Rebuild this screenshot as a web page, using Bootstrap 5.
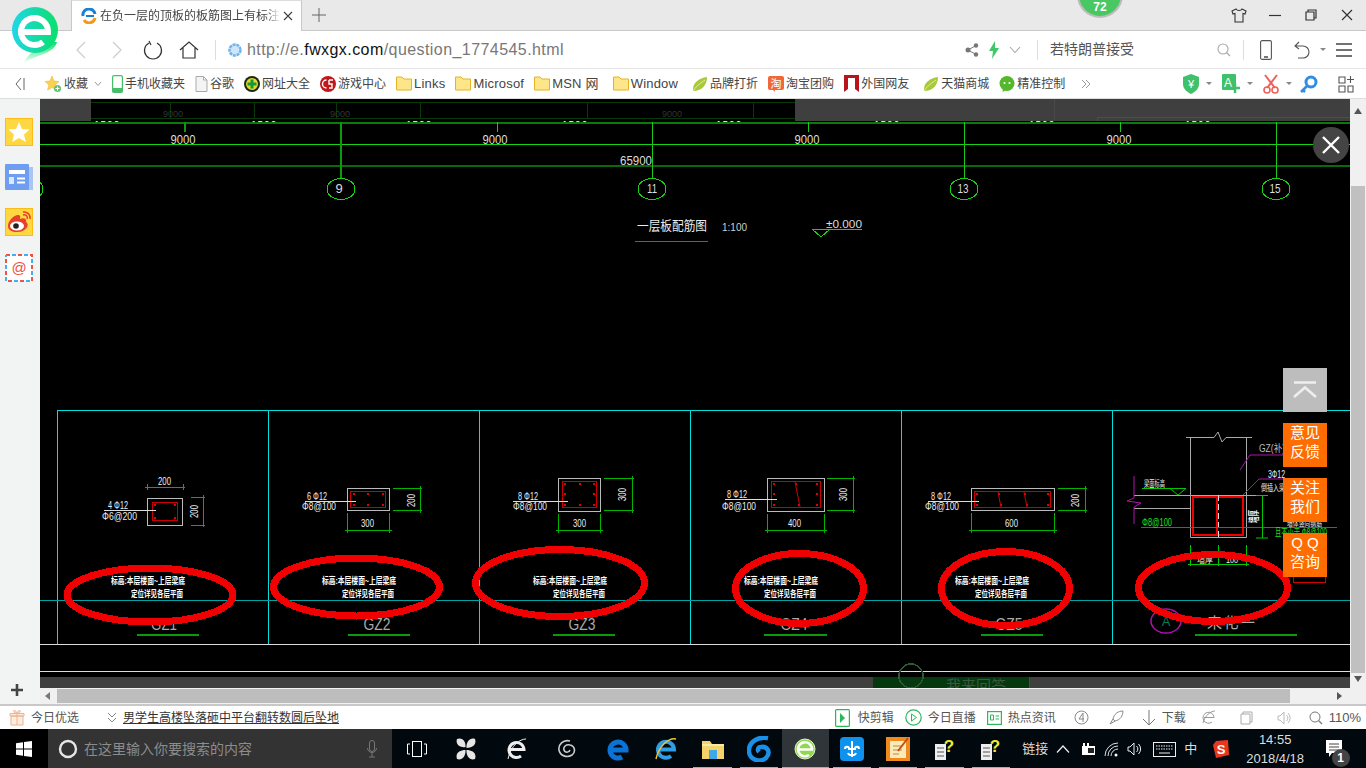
<!DOCTYPE html>
<html lang="zh">
<head>
  <meta charset="UTF-8" />
  <meta name="viewport" content="width=device-width, initial-scale=1.0" />
  <title>在负一层的顶板的板筋图上有标注</title>
  <link href="https://cdn.jsdelivr.net/npm/bootstrap@5.3.3/dist/css/bootstrap.min.css" rel="stylesheet" />
  <style>
    html, body { height: 768px; overflow: hidden; }
    body { font-family: "Liberation Sans", "Noto Sans CJK SC", sans-serif; font-size: 12px; color: #444; background: #fff; position: relative; }
    svg { display: block; flex-shrink: 0; }

    .app-logo { position: absolute; left: 10px; top: 6px; z-index: 5; }
    .score-ball { position: absolute; left: 1077px; top: -28px; width: 46px; height: 46px; border-radius: 50%; background: #48c763; border: 2px solid #bdbdbd; color: #fff; font-size: 12px; line-height: 14px; font-weight: 700; z-index: 5; padding-bottom: 2px; }

    .title-bar { height: 31px; background: #e9e9e9; border-bottom: 1px solid #c8c8c8; padding: 0 1px 0 71px; }
    .tab-item { width: 231px; height: 31px; background: #fff; border: 1px solid #c8c8c8; border-top-color: #ddd; border-bottom: 0; padding: 0 6px 0 9px; gap: 3px; }
    .tab-text { width: 180px; font-size: 12px; color: #444; white-space: nowrap; overflow: hidden; -webkit-mask-image: linear-gradient(90deg, #000 92%, transparent); mask-image: linear-gradient(90deg, #000 92%, transparent); }
    .tab-add { margin: 8px 0 0 10px; }
    .win-btn { width: 36px; }

    .addr-bar { height: 37px; background: #fff; padding-left: 63px; }
    .nav-slot { width: 36px; }
    .addr-sep { width: 1px; height: 20px; background: #ddd; }
    .addr-globe { margin-left: 11px; }
    .addr-url { font-size: 16px; color: #777; letter-spacing: .43px; white-space: nowrap; }
    .addr-url b { font-weight: 400; color: #111; }
    .addr-search { width: 197px; font-size: 14px; color: #555; padding: 0 4px 0 12px; }
    .addr-gap { margin-left: 10px; }

    .fav-bar { height: 31px; background: #fff; border-top: 1px solid #e6e6e6; border-bottom: 1px solid #ddd; padding-left: 14px; }
    .fav-item { gap: 2px; margin-left: 10px; white-space: nowrap; color: #444; }
    .fav-first { margin-left: 18px; }
    .fav-wide { margin-left: 14px; }
    .fav-latin { font-size: 13px; letter-spacing: .2px; }
    .fav-tools { gap: 4px; }
    .fav-caret { width: 0; height: 0; border-left: 3px solid transparent; border-right: 3px solid transparent; border-top: 3px solid #888; margin: 0 6px 0 3px; }

    .work-area { height: 605px; position: relative; }
    .side-rail { width: 40px; background: #f2f4f4; padding: 19px 5px 6px; gap: 18px; }
    .cad-view { width: 1310px; height: 589px; background: #000; }
    .cad-view text { font-family: "Liberation Sans", "Noto Sans CJK SC", sans-serif; }
    .vbar { width: 16px; height: 589px; background: #f0f0f0; padding-top: 87px; position: relative; }
    .vbar-thumb { height: 487px; background: #c0c0c0; margin: 0 1px; }
    .vbar-up { position: absolute; top: 9px; left: 4px; width: 0; height: 0; border-left: 4px solid transparent; border-right: 4px solid transparent; border-bottom: 6px solid #555; }
    .vbar-down { position: absolute; bottom: 6px; left: 4px; width: 0; height: 0; border-left: 4px solid transparent; border-right: 4px solid transparent; border-top: 6px solid #555; }
    .hbar { height: 16px; background: #f0f0f0; padding-left: 17px; position: relative; }
    .hbar-thumb { width: 1233px; height: 14px; background: #bdbdbd; margin-top: 1px; }
    .hbar-left { position: absolute; left: 5px; top: 4px; width: 0; height: 0; border-top: 4px solid transparent; border-bottom: 4px solid transparent; border-right: 5px solid #777; }
    .hbar-right { position: absolute; left: 1297px; top: 4px; width: 0; height: 0; border-top: 4px solid transparent; border-bottom: 4px solid transparent; border-left: 5px solid #555; }
    .view-close { position: absolute; left: 1313px; top: 28px; width: 36px; height: 36px; border-radius: 50%; background: #444; }
    .float-stack { position: absolute; left: 1283px; top: 269px; width: 44px; gap: 11px; }
    .float-top { height: 44px; background: #bdbdbd; }
    .float-btn { height: 44px; background: #ff6c00; color: #fff; font-size: 15px; line-height: 19px; text-align: center; padding-bottom: 6px; }
    .float-qq { letter-spacing: 4px; padding-left: 4px; }

    .state-bar { height: 25px; background: #fff; border-top: 2px solid #c8c8c8; color: #555; padding-left: 5px; }
    .state-chevron { margin: 0 6px 0 28px; }
    .state-news { width: 216px; color: #333; text-decoration: underline; white-space: nowrap; }
    .state-tools { margin-left: auto; padding-right: 5px; }
    .state-zoom { font-size: 13px; }
    .sg-6 { margin-left: 6px; }
    .sg-8 { margin-left: 8px; }
    .sg-11 { margin-left: 11px; }
    .sg-18 { margin-left: 18px; }
    .sg-20 { margin-left: 20px; }

    .task-bar { height: 40px; background: #02090e; color: #ddd; }
    .task-start { width: 48px; background: #000; flex-shrink: 0; }
    .task-search { width: 344px; background: #333; color: #8c8c8c; font-size: 14px; padding: 0 15px 0 10px; gap: 6px; flex-shrink: 0; }
    .task-view { width: 49px; flex-shrink: 0; }
    .task-slot { width: 46.4px; height: 40px; position: relative; flex-shrink: 0; }
    .task-slot-wide { width: 50.5px; height: 40px; flex-shrink: 0; }
    .task-open::after { content: ""; position: absolute; left: 4px; right: 4px; bottom: 0; height: 2px; background: #76b9ed; }
    .task-active { background: #2f3538; }
    .task-active.task-open::after { left: 0; right: 0; }
    .tray-text { font-size: 13px; color: #ddd; white-space: nowrap; }
    .tray-time { width: 70px; font-size: 13px; color: #ddd; line-height: 19px; text-align: center; margin-left: 11px; flex-shrink: 0; }
    .note-slot { margin-right: 9px; }
    .note-badge { position: absolute; left: 21px; top: 20px; width: 18px; height: 18px; border-radius: 50%; background: #444; color: #fff; font-size: 12px; font-weight: 700; }
  </style>
</head>
<body>
  <!-- browser logo, sits over tabs and address bar -->
  <svg class="app-logo" width="50" height="58" viewBox="0 0 50 58">
    <defs>
      <linearGradient id="logoFill" x1="0" x2="1" y1="0" y2="0"><stop offset="0" stop-color="#1fd6e8"/><stop offset="1" stop-color="#0be06a"/></linearGradient>
      <linearGradient id="logoTail" x1="0" x2="0" y1="0" y2="1"><stop offset="0" stop-color="#0be06a"/><stop offset="1" stop-color="#0be06a" stop-opacity="0"/></linearGradient>
    </defs>
    <path d="M47 36 C44 47 30 48 13 57 C20 45 30 42 36 36 Z" fill="url(#logoTail)"/>
    <circle cx="25" cy="24" r="23" fill="url(#logoFill)"/>
    <path d="M12 26 H38 A13.500 13.500 0 1 0 33 36" fill="none" stroke="#fff" stroke-width="6"/>
  </svg>
  <div class="score-ball d-flex align-items-end justify-content-center">72</div>

  <!-- tabs -->
  <div class="title-bar d-flex align-items-start">
    <div class="tab-item d-flex align-items-center">
      <svg width="16" height="16" viewBox="0 0 16 16"><path d="M2 8 A6 6 0 0 1 14 6" fill="none" stroke="#1c7fd6" stroke-width="3"/><path d="M14 10 A6 6 0 0 1 3 12" fill="none" stroke="#f39a1e" stroke-width="3"/><path d="M5 8 H13" stroke="#1c7fd6" stroke-width="2"/></svg>
      <span class="tab-text">在负一层的顶板的板筋图上有标注</span>
      <svg width="10" height="10" viewBox="0 0 10 10"><path d="M1 1 L9 9 M9 1 L1 9" stroke="#444" stroke-width="1.200"/></svg>
    </div>
    <svg width="14" height="14" viewBox="0 0 14 14" class="tab-add"><path d="M7 0 V14 M0 7 H14" stroke="#666" stroke-width="1"/></svg>
    <div class="d-flex align-items-center ms-auto h-100">
      <div class="win-btn d-flex justify-content-center"><svg width="16" height="15" viewBox="0 0 16 15"><path d="M5 1 L1 3 L2 6 L4 5.500 V14 H12 V5.500 L14 6 L15 3 L11 1 C10 3 6 3 5 1 Z" fill="none" stroke="#333" stroke-width="1.100"/></svg></div>
      <div class="win-btn d-flex justify-content-center"><svg width="12" height="12" viewBox="0 0 12 12"><path d="M0 6.500 H12" stroke="#333" stroke-width="1.200"/></svg></div>
      <div class="win-btn d-flex justify-content-center"><svg width="12" height="12" viewBox="0 0 12 12"><path d="M3 3 V1 H11 V9 H9 M1 3 H9 V11 H1 Z" fill="none" stroke="#333" stroke-width="1.200"/></svg></div>
      <div class="win-btn d-flex justify-content-center"><svg width="12" height="12" viewBox="0 0 12 12"><path d="M1 1 L11 11 M11 1 L1 11" stroke="#333" stroke-width="1.200"/></svg></div>
    </div>
  </div>

  <!-- address bar -->
  <div class="addr-bar d-flex align-items-center">
    <div class="nav-slot d-flex justify-content-center"><svg width="10" height="18" viewBox="0 0 10 18"><path d="M9 1 L1 9 L9 17" fill="none" stroke="#ccc" stroke-width="1.200"/></svg></div>
    <div class="nav-slot d-flex justify-content-center"><svg width="10" height="18" viewBox="0 0 10 18"><path d="M1 1 L9 9 L1 17" fill="none" stroke="#ccc" stroke-width="1.200"/></svg></div>
    <div class="nav-slot d-flex justify-content-center"><svg width="20" height="20" viewBox="0 0 20 20"><path d="M6 3 A8.500 8.500 0 1 0 14 3 M6 1 L8 5" fill="none" stroke="#333" stroke-width="1.200"/></svg></div>
    <div class="nav-slot d-flex justify-content-center"><svg width="20" height="20" viewBox="0 0 20 20"><path d="M1 10 L10 2 L19 10 M4 8 V18 H16 V8" fill="none" stroke="#333" stroke-width="1.200"/></svg></div>
    <div class="addr-sep ms-2"></div>
    <svg width="16" height="16" viewBox="0 0 16 16" class="addr-globe"><circle cx="8" cy="8" r="5.500" fill="#cfe6fa" stroke="#6db3ec" stroke-width="2.500" stroke-dasharray="3 .8"/></svg>
    <div class="addr-url ms-1">http://e.<b>fwxgx.com</b>/question_1774545.html</div>
    <div class="d-flex align-items-center ms-auto">
      <svg width="14" height="14" viewBox="0 0 14 14"><g fill="#777"><circle cx="3" cy="7" r="2.500"/><circle cx="11" cy="2.500" r="2.200"/><circle cx="11" cy="11.500" r="2.200"/></g><path d="M3 7 L11 2.500 M3 7 L11 11.500" stroke="#777"/></svg>
      <svg width="10" height="18" viewBox="0 0 10 18" class="addr-gap"><path d="M6 0 L0 10 H4 L3 18 L10 7 H6 Z" fill="#3fc868"/></svg>
      <svg width="12" height="8" viewBox="0 0 12 8" class="addr-gap"><path d="M1 1 L6 6.500 L11 1" fill="none" stroke="#aaa" stroke-width="1.100"/></svg>
      <div class="addr-sep ms-3"></div>
      <div class="addr-search d-flex align-items-center justify-content-between">
        <span>若特朗普接受</span>
        <svg width="14" height="14" viewBox="0 0 14 14"><circle cx="6" cy="6" r="5" fill="none" stroke="#aaa" stroke-width="1.100"/><path d="M9.500 9.500 L13 13" stroke="#aaa" stroke-width="1.300"/></svg>
      </div>
      <div class="addr-sep ms-2"></div>
      <div class="d-flex justify-content-center nav-slot ms-1"><svg width="12" height="20" viewBox="0 0 12 20"><rect x=".6" y=".6" width="10.800" height="18.800" rx="1.500" fill="none" stroke="#555" stroke-width="1.100"/><path d="M4 17 H8" stroke="#555" stroke-width="1.600"/></svg></div>
      <div class="d-flex justify-content-center align-items-center nav-slot"><svg width="16" height="20" viewBox="0 0 16 20"><path d="M5 2 L1 6 L5 9 M1 6 H9 A6 6 0 0 1 9 18 H4" fill="none" stroke="#555" stroke-width="1.100"/></svg></div>
      <div class="fav-caret m-0"></div>
      <div class="d-flex justify-content-center nav-slot"><svg width="16" height="14" viewBox="0 0 16 14"><path d="M0 1 H16 M0 7 H16 M0 13 H16" stroke="#444" stroke-width="1.300"/></svg></div>
      <div class="ps-1"></div>
    </div>
  </div>

  <!-- favourites -->
  <div class="fav-bar d-flex align-items-center">
    <svg width="12" height="14" viewBox="0 0 12 14"><path d="M7 1 L2 7 L7 13" fill="none" stroke="#666"/><path d="M10 1 V13" stroke="#666"/></svg>
    <div class="fav-item fav-first d-flex align-items-center"><svg width="18" height="18" viewBox="0 0 18 18"><path d="M8 1 L10 6 L15 6.500 L11 10 L12.500 15 L8 12.500 L3.500 15 L5 10 L1 6.500 L6 6 Z" fill="#fbd24f" stroke="#e9b93a" stroke-width=".6"/><circle cx="13.500" cy="13.500" r="3.500" fill="#5cc36f"/><path d="M13.500 11.500 V15.500 M11.500 13.500 H15.500" stroke="#fff"/></svg><span>收藏</span><svg width="8" height="6" viewBox="0 0 8 6" class="ms-1"><path d="M1 1 L4 4.500 L7 1" fill="none" stroke="#999"/></svg></div>
    <div class="fav-item d-flex align-items-center"><svg width="11" height="18" viewBox="0 0 11 18"><rect x=".6" y=".6" width="9.800" height="16.800" rx="1.500" fill="#fff" stroke="#45bf6a" stroke-width="1.200"/><rect x=".6" y="13" width="9.800" height="4.400" fill="#45bf6a"/></svg><span>手机收藏夹</span></div>
    <div class="fav-item d-flex align-items-center"><svg width="13" height="16" viewBox="0 0 13 16"><path d="M1 .5 H8.500 L12 4 V15.500 H1 Z M8.500 .5 V4 H12" fill="#f4f4f4" stroke="#aaa"/></svg><span>谷歌</span></div>
    <div class="fav-item d-flex align-items-center"><svg width="16" height="16" viewBox="0 0 16 16"><circle cx="8" cy="8" r="8" fill="#1a2a10"/><circle cx="8" cy="8" r="6" fill="#e8d62a"/><path d="M8 3.500 V12.500 M3.500 8 H12.500" stroke="#129a3a" stroke-width="3"/></svg><span>网址大全</span></div>
    <div class="fav-item d-flex align-items-center"><svg width="16" height="16" viewBox="0 0 16 16"><circle cx="8" cy="8" r="8" fill="#c1161c"/><path d="M6.500 4 A4 4 0 1 0 6.500 12 M9 4 H13 M9 4 V8 H12 V12 H9" fill="none" stroke="#fff" stroke-width="1.400"/></svg><span>游戏中心</span></div>
    <div class="fav-item d-flex align-items-center"><svg width="16" height="15" viewBox="0 0 16 15"><path d="M.5 1 H6 L8 3 H15.500 V14 H.5 Z" fill="#fde68a" stroke="#e6b422"/></svg><span class="fav-latin">Links</span></div>
    <div class="fav-item d-flex align-items-center"><svg width="16" height="15" viewBox="0 0 16 15"><path d="M.5 1 H6 L8 3 H15.500 V14 H.5 Z" fill="#fde68a" stroke="#e6b422"/></svg><span class="fav-latin">Microsof</span></div>
    <div class="fav-item d-flex align-items-center"><svg width="16" height="15" viewBox="0 0 16 15"><path d="M.5 1 H6 L8 3 H15.500 V14 H.5 Z" fill="#fde68a" stroke="#e6b422"/></svg><span class="fav-latin">MSN 网</span></div>
    <div class="fav-item fav-wide d-flex align-items-center"><svg width="16" height="15" viewBox="0 0 16 15"><path d="M.5 1 H6 L8 3 H15.500 V14 H.5 Z" fill="#fde68a" stroke="#e6b422"/></svg><span class="fav-latin">Window</span></div>
    <div class="fav-item fav-wide d-flex align-items-center"><svg width="16" height="16" viewBox="0 0 16 16"><path d="M1 15 C0 7 7 2 15 1 C15 9 10 15 1 15 Z" fill="#a8c93a"/><path d="M1 15 C5 9 9 7 13 4" fill="none" stroke="#e3ee9a"/></svg><span>品牌打折</span></div>
    <div class="fav-item d-flex align-items-center"><svg width="16" height="16" viewBox="0 0 16 16"><rect width="16" height="14" rx="2" fill="#f2673a"/><path d="M6 16 L8 13 H5 Z" fill="#f2673a"/><text x="8" y="11.500" text-anchor="middle" font-size="11" fill="#fff" font-family="Noto Sans CJK SC">淘</text></svg><span>淘宝团购</span></div>
    <div class="fav-item d-flex align-items-center"><svg width="15" height="17" viewBox="0 0 15 17"><path d="M0 0 H15 V17 L11 14 V3 H4 V14 L0 17 Z" fill="#b8141c"/></svg><span>外国网友</span></div>
    <div class="fav-item fav-wide d-flex align-items-center"><svg width="16" height="16" viewBox="0 0 16 16"><path d="M1 15 C0 7 7 2 15 1 C15 9 10 15 1 15 Z" fill="#a8c93a"/><path d="M1 15 C5 9 9 7 13 4" fill="none" stroke="#e3ee9a"/></svg><span>天猫商城</span></div>
    <div class="fav-item d-flex align-items-center"><svg width="16" height="16" viewBox="0 0 16 16"><circle cx="8" cy="7.500" r="7.500" fill="#55b82c"/><circle cx="5.500" cy="7" r="1.100" fill="#fff"/><circle cx="10.500" cy="7" r="1.100" fill="#fff"/><path d="M4 13 L3.500 16 L7 14 Z" fill="#55b82c"/></svg><span>精准控制</span></div>
    <svg width="10" height="10" viewBox="0 0 10 10" class="ms-3"><path d="M1 1 L5 5 L1 9 M5 1 L9 5 L5 9" fill="none" stroke="#999"/></svg>
    <div class="fav-tools d-flex align-items-center ms-auto">
      <svg width="16" height="20" viewBox="0 0 16 20"><path d="M8 0 L16 3 V10 C16 15 12 18 8 20 C4 18 0 15 0 10 V3 Z" fill="#3fc06a"/><text x="8" y="14" text-anchor="middle" font-size="11" fill="#fff">¥</text></svg><div class="fav-caret"></div>
      <svg width="18" height="20" viewBox="0 0 18 20"><rect width="14" height="16" rx="1" fill="#3fc06a"/><text x="6" y="13" text-anchor="middle" font-size="12" fill="#fff">A</text><path d="M13 9 V19 M8 14 H18" stroke="#3fc06a" stroke-width="2.500"/></svg><div class="fav-caret"></div>
      <svg width="16" height="20" viewBox="0 0 16 20"><path d="M2 1 L12 14 M14 1 L4 14" stroke="#f0605a" stroke-width="2"/><circle cx="4" cy="16" r="3" fill="none" stroke="#f0605a" stroke-width="1.600"/><circle cx="12" cy="16" r="3" fill="none" stroke="#f0605a" stroke-width="1.600"/></svg><div class="fav-caret me-1"></div>
      <svg width="18" height="18" viewBox="0 0 18 18"><circle cx="11" cy="7" r="5" fill="none" stroke="#2f8de8" stroke-width="3"/><path d="M7 11 L1 17 M3 15 L5 17" stroke="#2f8de8" stroke-width="2.500"/></svg>
      <svg width="16" height="18" viewBox="0 0 16 18" class="ms-3"><path d="M1 2 H7 V8 H1 Z M1 11 H7 V17 H1 Z M10 11 H15 V17 H10 Z M12.500 1 V8 M9 4.500 H16" fill="none" stroke="#555" stroke-width="1.100"/></svg>
      <div class="ps-2"></div>
    </div>
  </div>

  <!-- page area -->
  <div class="work-area d-flex">
    <div class="side-rail d-flex flex-column">
      <svg width="28" height="28" viewBox="0 0 28 28"><rect x=".5" y=".5" width="27" height="27" fill="#ffd740" stroke="#fbbc1a"/><path d="M14 4 L17 11 L24.500 11.600 L19 16.500 L20.800 24 L14 20 L7.200 24 L9 16.500 L3.500 11.600 L11 11 Z" fill="#fff"/></svg>
      <svg width="28" height="26" viewBox="0 0 28 26"><path d="M23 3 H28 V26 H23 Z" fill="#a9c4f5"/><rect width="24" height="26" rx="1" fill="#6d9ef2"/><rect x="4" y="6" width="16" height="4" fill="#fff"/><rect x="4" y="13" width="5" height="7" fill="#dbe7fd"/><path d="M12 14.500 H20 M12 18.500 H20" stroke="#fff" stroke-width="2"/></svg>
      <svg width="28" height="28" viewBox="0 0 28 28"><rect x=".5" y=".5" width="27" height="27" fill="#ffd740" stroke="#fbbc1a"/><path d="M3 18 C3 12 10 6 14 7 C16 8 15 10 15 11 C20 9 22 12 21 14 C25 16 22 24 12 24 C7 24 3 22 3 18 Z" fill="#e6402f"/><ellipse cx="12" cy="18" rx="7" ry="4.500" fill="#fff"/><circle cx="11" cy="18" r="2.800" fill="#222"/><path d="M18 4 A6 6 0 0 1 25 11 M18 7 A3 3 0 0 1 22 11" fill="none" stroke="#e6402f" stroke-width="1.500"/></svg>
      <svg width="28" height="28" viewBox="0 0 28 28"><rect x="1" y="1" width="26" height="26" fill="#fff"/><rect x="1" y="1" width="26" height="26" fill="none" stroke="#f0524a" stroke-width="2" stroke-dasharray="4 8"/><rect x="1" y="1" width="26" height="26" fill="none" stroke="#45aef0" stroke-width="2" stroke-dasharray="4 8" stroke-dashoffset="-6"/><text x="14" y="19" text-anchor="middle" font-size="15" fill="#ee4f42">@</text></svg>
      <svg width="16" height="16" viewBox="0 0 16 16" class="mt-auto ms-1"><path d="M8 2 V14 M2 8 H14" stroke="#444" stroke-width="2.600"/></svg>
    </div>
    <div class="flex-grow-1 d-flex flex-column">
      <div class="d-flex">
        <!-- drawing, a free canvas in page coordinates -->
        <div class="cad-view">
          <svg width="1310" height="589" viewBox="40 99 1310 589" shape-rendering="crispEdges" font-size="10">
            <defs>
              <clipPath id="cutTop"><rect x="40" y="121" width="1310" height="3"/></clipPath>
            </defs>

            <!-- axis dimensions at the top -->
            <g clip-path="url(#cutTop)" fill="#fff" font-size="10" letter-spacing="1">
              <text x="94" y="129">1500</text><text x="251" y="129">1500</text><text x="406" y="129">1500</text><text x="562" y="129">1500</text><text x="716" y="129">1500</text><text x="874" y="129">1500</text><text x="1029" y="129">1500</text><text x="1185" y="129">1500</text>
            </g>
            <rect x="40" y="99" width="51" height="22" fill="#3f3f3f"/>
            <rect x="795" y="99" width="555" height="22" fill="#3f3f3f"/>
            <path d="M1054 99 V121" stroke="#4a4a4a"/>
            <path d="M1097 121 V117 H1350" stroke="#4d4d4d" fill="none"/>
            <g stroke="#083a08" fill="none">
              <path d="M91 102 H795 M91 118 H795 M170 102 V118 M254 102 V118 M336 102 V118 M420 102 V118 M587 102 V118 M753 102 V118"/>
            </g>
            <g fill="#333" font-size="9"><text x="163" y="117">9000</text><text x="330" y="117">9000</text><text x="662" y="117">9000</text></g>

            <path d="M40 123 H1350" stroke="#0a7a0a" stroke-width="2"/>
            <path d="M40 144.500 H1350" stroke="#14d414"/>
            <path d="M40 166 H1350" stroke="#0a6a0a" stroke-width="2"/>
            <g stroke="#0a9a0a" stroke-width="2"><path d="M185 122 V132 M341 122 V179"/></g>
            <g stroke="#1ac81a"><path d="M497 122 V132 M808 122 V132 M1120 122 V132 M652 122 V179 M964 122 V179 M1276 122 V179"/></g>
            <g fill="none" stroke="#14d414">
              <ellipse cx="341" cy="189" rx="14" ry="10.500"/><ellipse cx="652" cy="189" rx="14" ry="10.500"/><ellipse cx="964" cy="189" rx="14" ry="10.500"/><ellipse cx="1276" cy="189" rx="14" ry="10.500"/><ellipse cx="29" cy="189" rx="14" ry="10.500"/>
            </g>
            <g fill="#ddd" font-size="12" text-anchor="middle">
              <text x="183" y="144" textLength="25" lengthAdjust="spacingAndGlyphs">9000</text><text x="495" y="144" textLength="25" lengthAdjust="spacingAndGlyphs">9000</text><text x="807" y="144" textLength="25" lengthAdjust="spacingAndGlyphs">9000</text><text x="1119" y="144" textLength="25" lengthAdjust="spacingAndGlyphs">9000</text>
              <text x="636" y="165" textLength="32" lengthAdjust="spacingAndGlyphs">65900</text>
            </g>
            <g fill="#ddd" font-size="13" text-anchor="middle"><text x="339" y="193">9</text><text x="652" y="193" textLength="10" lengthAdjust="spacingAndGlyphs">11</text><text x="963" y="193" textLength="11" lengthAdjust="spacingAndGlyphs">13</text><text x="1275" y="193" textLength="11" lengthAdjust="spacingAndGlyphs">15</text></g>

            <text x="637" y="230" fill="#eee" font-size="13" textLength="70" lengthAdjust="spacingAndGlyphs">一层板配筋图</text>
            <path d="M635 241.500 H708" stroke="#0c9c0c"/>
            <text x="722" y="231" fill="#ccc" font-size="10" textLength="25" lengthAdjust="spacingAndGlyphs">1:100</text>
            <text x="826" y="228" fill="#ddd" font-size="11" textLength="36" lengthAdjust="spacingAndGlyphs">±0.000</text>
            <path d="M812 229 H862 M812 229 L821 237 L830 229" stroke="#14d414" fill="none"/>

            <!-- schedule grid -->
            <path d="M57 410.500 H1350 M57 410 V644 M268.500 410 V644 M479.500 410 V644 M690.500 410 V644 M901.500 410 V644 M1112.500 410 V644" stroke="#00dede" fill="none"/>
            <path d="M40 600.500 H1350" stroke="#00a3a3"/>
            <path d="M40 644.500 H1350 M40 671.500 H1350" stroke="#ddd"/>
            <rect x="40" y="677" width="1310" height="11" fill="#3f3f3f"/>
            <path d="M1029 677 V688" stroke="#4a4a4a"/>
            <rect x="873" y="677" width="156" height="11" fill="#06380f"/>
            <text x="946" y="691" fill="#3a5a40" font-size="15">我来回答</text>
            <circle cx="911" cy="676" r="12" fill="none" stroke="#2c5a35" stroke-width="1.500"/>

            <!-- section titles, the red rings run over them -->
            <g fill="#aaa" font-size="17" text-anchor="middle">
              <text x="164" y="630" textLength="26" lengthAdjust="spacingAndGlyphs">GZ1</text><text x="377" y="630" textLength="27" lengthAdjust="spacingAndGlyphs">GZ2</text><text x="582" y="630" textLength="27" lengthAdjust="spacingAndGlyphs">GZ3</text><text x="794" y="630" textLength="27" lengthAdjust="spacingAndGlyphs">GZ4</text><text x="1009" y="630" textLength="27" lengthAdjust="spacingAndGlyphs">GZ5</text>
            </g>
            <text x="1207" y="628" fill="#aaa" font-size="15" textLength="48">来 化 一</text>
            <path d="M137 634.500 H199 M348 634.500 H410 M553 634.500 H615 M764 634.500 H827 M981 634.500 H1043 M1195 634.500 H1297" stroke="#0a9a0a" stroke-width="2"/>

            <!-- rebar dots in each section -->
            <g fill="#e00000">
              <path d="M154 504 h2 v2 h-2 Z M174 504 h2 v2 h-2 Z M154 517 h2 v2 h-2 Z M174 517 h2 v2 h-2 Z"/>
              <path d="M353 493 h2 v2 h-2 Z M367 493 h2 v2 h-2 Z M382 493 h2 v2 h-2 Z M353 504 h2 v2 h-2 Z M367 504 h2 v2 h-2 Z M382 504 h2 v2 h-2 Z"/>
              <path d="M564 483 h2 v2 h-2 Z M579 483 h2 v2 h-2 Z M593 483 h2 v2 h-2 Z M564 493 h2 v2 h-2 Z M593 493 h2 v2 h-2 Z M564 504 h2 v2 h-2 Z M579 504 h2 v2 h-2 Z M593 504 h2 v2 h-2 Z"/>
              <path d="M773 483 h2 v2 h-2 Z M795 483 h2 v2 h-2 Z M816 483 h2 v2 h-2 Z M773 493 h2 v2 h-2 Z M816 493 h2 v2 h-2 Z M773 504 h2 v2 h-2 Z M798 504 h2 v2 h-2 Z M816 504 h2 v2 h-2 Z"/>
              <path d="M976 493 h2 v2 h-2 Z M998 493 h2 v2 h-2 Z M1024 493 h2 v2 h-2 Z M1047 493 h2 v2 h-2 Z M976 504 h2 v2 h-2 Z M1000 504 h2 v2 h-2 Z M1026 504 h2 v2 h-2 Z M1047 504 h2 v2 h-2 Z"/>
            </g>

            <!-- GZ1 -->
            <g fill="none">
              <rect x="147.500" y="498.500" width="35" height="27" stroke="#bbb"/>
              <rect x="152.500" y="502.500" width="25" height="18" stroke="#c80000"/>
              <path d="M145 487 H185 M147 484 V490 M183 484 V490 M203 495 V527 M191 497.500 H205 M191 525.500 H205" stroke="#00b400"/>
              <path d="M104 510.500 H156" stroke="#ddd"/>
            </g>
            <g fill="#eee" font-size="11"><text x="158" y="485" textLength="13" lengthAdjust="spacingAndGlyphs">200</text><text x="108" y="509" textLength="20" lengthAdjust="spacingAndGlyphs">4 Φ12</text><text x="102" y="520" textLength="35" lengthAdjust="spacingAndGlyphs">Φ6@200</text><text transform="translate(198 518) rotate(-90)" textLength="13" lengthAdjust="spacingAndGlyphs">200</text></g>

            <!-- GZ2 -->
            <g fill="none">
              <rect x="347.500" y="488.500" width="42" height="22" stroke="#bbb"/>
              <rect x="350.500" y="491.500" width="35" height="16" stroke="#c80000"/>
              <path d="M420 486 V513 M393 488.500 H422 M393 510.500 H422 M347 513 V533 M389 513 V533 M345 530.500 H392" stroke="#00b400"/>
              <path d="M305 501.500 H356" stroke="#ddd"/>
            </g>
            <g fill="#eee" font-size="11"><text x="361" y="527" textLength="13" lengthAdjust="spacingAndGlyphs">300</text><text x="307" y="500" textLength="20" lengthAdjust="spacingAndGlyphs">6 Φ12</text><text x="302" y="510" textLength="34" lengthAdjust="spacingAndGlyphs">Φ8@100</text><text transform="translate(415 507) rotate(-90)" textLength="13" lengthAdjust="spacingAndGlyphs">200</text></g>

            <!-- GZ3 -->
            <g fill="none">
              <rect x="558.500" y="478.500" width="42" height="33" stroke="#bbb"/>
              <rect x="562.500" y="481.500" width="34" height="26" stroke="#c80000"/>
              <path d="M632 476 V513 M604 478.500 H634 M604 510.500 H634 M558 514 V533 M600 514 V533 M556 530.500 H603" stroke="#00b400"/>
              <path d="M513 501.500 H568" stroke="#ddd"/>
            </g>
            <g fill="#eee" font-size="11"><text x="573" y="527" textLength="13" lengthAdjust="spacingAndGlyphs">300</text><text x="518" y="500" textLength="20" lengthAdjust="spacingAndGlyphs">8 Φ12</text><text x="513" y="510" textLength="34" lengthAdjust="spacingAndGlyphs">Φ8@100</text><text transform="translate(626 501) rotate(-90)" textLength="13" lengthAdjust="spacingAndGlyphs">300</text></g>

            <!-- GZ4 -->
            <g fill="none">
              <rect x="767.500" y="478.500" width="57" height="33" stroke="#bbb"/>
              <rect x="771.500" y="481.500" width="49" height="26" stroke="#c80000"/>
              <path d="M795 482 L800 507" stroke="#d00000" shape-rendering="auto"/>
              <path d="M853 476 V513 M827 478.500 H855 M827 510.500 H855 M767 514 V533 M824 514 V533 M765 530.500 H827" stroke="#00b400"/>
              <path d="M725 499.500 H777" stroke="#ddd"/>
            </g>
            <g fill="#eee" font-size="11"><text x="788" y="527" textLength="13" lengthAdjust="spacingAndGlyphs">400</text><text x="727" y="498" textLength="20" lengthAdjust="spacingAndGlyphs">8 Φ12</text><text x="722" y="510" textLength="34" lengthAdjust="spacingAndGlyphs">Φ8@100</text><text transform="translate(847 501) rotate(-90)" textLength="13" lengthAdjust="spacingAndGlyphs">300</text></g>

            <!-- GZ5 -->
            <g fill="none">
              <rect x="971.500" y="488.500" width="83" height="22" stroke="#bbb"/>
              <rect x="974.500" y="491.500" width="76" height="16" stroke="#c80000"/>
              <path d="M998 492 L1001 507 M1024 492 L1027 507" stroke="#d00000" shape-rendering="auto"/>
              <path d="M1085 486 V513 M1058 488.500 H1087 M1058 510.500 H1087 M971 513 V533 M1054 513 V533 M969 530.500 H1057" stroke="#00b400"/>
              <path d="M928 501.500 H979" stroke="#ddd"/>
            </g>
            <g fill="#eee" font-size="11"><text x="1005" y="527" textLength="13" lengthAdjust="spacingAndGlyphs">600</text><text x="931" y="500" textLength="20" lengthAdjust="spacingAndGlyphs">8 Φ12</text><text x="925" y="510" textLength="34" lengthAdjust="spacingAndGlyphs">Φ8@100</text><text transform="translate(1079 507) rotate(-90)" textLength="13" lengthAdjust="spacingAndGlyphs">200</text></g>

            <!-- wall detail -->
            <g fill="none">
              <path d="M1186 437.500 H1214 L1218 432 L1222 442 L1226 437.500 H1252 M1190.500 437 V537.500 H1246.500 V437 M1134 495.500 H1262 M1134 508.500 H1191" stroke="#aaa" shape-rendering="auto"/>
              <rect x="1193" y="497" width="50" height="38" stroke="#ee0000" stroke-width="2"/>
              <path d="M1217 497 V535" stroke="#ee0000" stroke-width="2"/>
              <path d="M1218.500 495 V537" stroke="#ddd" stroke-dasharray="6 3"/>
              <path d="M1134 476 V498 L1127 501 L1141 503 L1134 507 V524" stroke="#b012b0" shape-rendering="auto"/>
              <path d="M1141 527.500 H1337" stroke="#c018c0"/>
              <path d="M1240 470 L1250 455 H1285 M1243 495 L1259 479 H1285" stroke="#b012b0" shape-rendering="auto"/>
              <path d="M1142 488.500 H1186 M1170 488.500 L1178 495 L1186 488.500 M1262.500 495 V538 M1256 495.500 H1268 M1256 538 H1268 M1190.500 545 V566 M1218.500 545 V566 M1246.500 545 V566 M1188 564.500 H1249" stroke="#00c800" shape-rendering="auto"/>
              <rect x="1293.500" y="570.500" width="32" height="12" stroke="#d00000"/>
            </g>
            <g font-size="9" fill="#eee">
              <text x="1144" y="487" textLength="21" lengthAdjust="spacingAndGlyphs">梁面标高</text>
              <text x="1259" y="452" fill="#bbb" font-size="10" textLength="26" lengthAdjust="spacingAndGlyphs">GZ(补)</text>
              <text x="1268" y="478" font-size="10" textLength="17" lengthAdjust="spacingAndGlyphs">3Φ12</text>
              <text x="1261" y="491" textLength="24" lengthAdjust="spacingAndGlyphs">倒插入梁</text>
              <text x="1287" y="526" font-size="7" textLength="35" lengthAdjust="spacingAndGlyphs">墙体竖向钢筋</text>
              <text transform="translate(1258 523) rotate(-90)" font-size="11" font-weight="700" textLength="13" lengthAdjust="spacingAndGlyphs">墙厚</text>
              <text x="1142" y="526" font-size="11" fill="#1fe01f" textLength="30" lengthAdjust="spacingAndGlyphs">Φ8@100</text>
              <text x="1275" y="536" font-size="10" fill="#1fe01f" textLength="52" lengthAdjust="spacingAndGlyphs">且不小于 Φ8@100</text>
              <text x="1197" y="563" textLength="16" lengthAdjust="spacingAndGlyphs">墙厚</text><text x="1226" y="563" textLength="12" lengthAdjust="spacingAndGlyphs">100</text>
            </g>
            <ellipse cx="1166" cy="621" rx="15" ry="12" fill="none" stroke="#b012b0" stroke-width="1.500" shape-rendering="auto"/>
            <text x="1166" y="626" text-anchor="middle" fill="#0a7a50" font-size="13">A</text>

            <!-- notes inside the rings -->
            <g fill="#fff" font-size="9" font-weight="700">
              <text x="111" y="584" textLength="74" lengthAdjust="spacingAndGlyphs">标高:本层楼面~上层梁底</text><text x="131" y="597" textLength="52" lengthAdjust="spacingAndGlyphs">定位详见各层平面</text>
              <text x="322" y="584" textLength="74" lengthAdjust="spacingAndGlyphs">标高:本层楼面~上层梁底</text><text x="342" y="597" textLength="52" lengthAdjust="spacingAndGlyphs">定位详见各层平面</text>
              <text x="533" y="584" textLength="74" lengthAdjust="spacingAndGlyphs">标高:本层楼面~上层梁底</text><text x="553" y="597" textLength="52" lengthAdjust="spacingAndGlyphs">定位详见各层平面</text>
              <text x="744" y="584" textLength="74" lengthAdjust="spacingAndGlyphs">标高:本层楼面~上层梁底</text><text x="764" y="597" textLength="52" lengthAdjust="spacingAndGlyphs">定位详见各层平面</text>
              <text x="955" y="584" textLength="74" lengthAdjust="spacingAndGlyphs">标高:本层楼面~上层梁底</text><text x="975" y="597" textLength="52" lengthAdjust="spacingAndGlyphs">定位详见各层平面</text>
            </g>

            <!-- hand-drawn red rings -->
            <g fill="none" stroke="#f00000" stroke-width="7">
              <ellipse cx="150" cy="595" rx="83" ry="27"/>
              <ellipse cx="356.500" cy="587" rx="83" ry="29"/>
              <ellipse cx="560" cy="583" rx="84.500" ry="33.500"/>
              <ellipse cx="799.500" cy="588.500" rx="64" ry="35"/>
              <ellipse cx="1005.500" cy="588.500" rx="64" ry="37"/>
              <ellipse cx="1213" cy="588" rx="74.500" ry="33.500"/>
            </g>
          </svg>
        </div>
        <div class="vbar">
          <div class="vbar-up"></div>
          <div class="vbar-thumb"></div>
          <div class="vbar-down"></div>
        </div>
      </div>
      <div class="hbar">
        <div class="hbar-left"></div>
        <div class="hbar-thumb"></div>
        <div class="hbar-right"></div>
      </div>
    </div>

    <div class="view-close d-flex align-items-center justify-content-center">
      <svg width="18" height="18" viewBox="0 0 18 18"><path d="M1 1 L17 17 M17 1 L1 17" stroke="#fff" stroke-width="2.400"/></svg>
    </div>
    <div class="float-stack d-flex flex-column">
      <div class="float-top d-flex align-items-center justify-content-center">
        <svg width="24" height="18" viewBox="0 0 24 18"><path d="M1 1.500 H23 M1 16 L12 6.500 L23 16" fill="none" stroke="#eee" stroke-width="2.600"/></svg>
      </div>
      <div class="float-btn d-flex align-items-center justify-content-center">意见<br>反馈</div>
      <div class="float-btn d-flex align-items-center justify-content-center">关注<br>我们</div>
      <div class="float-btn d-flex flex-column align-items-center justify-content-center"><span class="float-qq">QQ</span><span>咨询</span></div>
    </div>
  </div>

  <!-- status bar -->
  <div class="state-bar d-flex align-items-center">
    <svg width="16" height="16" viewBox="0 0 16 16" class="ms-1"><path d="M2 6 H14 V15 H2 Z M1 3.500 H15 V6 H1 Z M8 3.500 V15 M8 3.500 C5 3 4 1 5 .6 C6.500 .3 8 2 8 3.500 C8 2 9.500 .3 11 .6 C12 1 11 3 8 3.500" fill="#fdeee3" stroke="#f3b08a"/></svg>
    <span class="sg-6">今日优选</span>
    <svg width="10" height="12" viewBox="0 0 10 12" class="state-chevron"><path d="M1 1 L5 5 L9 1 M1 6 L5 10 L9 6" fill="none" stroke="#888"/></svg>
    <a class="state-news">男学生高楼坠落砸中平台翻转数圆后坠地</a>
    <div class="state-tools d-flex align-items-center">
      <svg width="15" height="18" viewBox="0 0 15 18"><rect x=".6" y=".6" width="13.800" height="16.800" rx="1" fill="none" stroke="#2cb75a" stroke-width="1.200"/><path d="M5 4 L10 9 L5 14 Z" fill="#2cb75a"/></svg>
      <span class="sg-8">快剪辑</span>
      <svg width="17" height="17" viewBox="0 0 17 17" class="sg-11"><circle cx="8.500" cy="8.500" r="7.700" fill="none" stroke="#2cb75a" stroke-width="1.200"/><path d="M6.500 5 L11.500 8.500 L6.500 12 Z" fill="none" stroke="#2cb75a"/></svg>
      <span class="sg-6">今日直播</span>
      <svg width="15" height="15" viewBox="0 0 15 15" class="sg-11"><rect x=".6" y="1.600" width="13.800" height="12.800" fill="none" stroke="#2cb75a" stroke-width="1.200"/><path d="M3.500 5 V10 H6.500 V5 Z M8.500 6 H12 M8.500 9 H12" fill="none" stroke="#2cb75a"/></svg>
      <span class="sg-6">热点资讯</span>
      <svg width="15" height="15" viewBox="0 0 15 15" class="sg-18"><circle cx="7.500" cy="7.500" r="6.500" fill="none" stroke="#888"/><path d="M9 3 L5 9 H10 M9 3 V12" fill="none" stroke="#888"/></svg>
      <svg width="15" height="15" viewBox="0 0 15 15" class="sg-20"><path d="M14 1 C9 1 5 4 4 9 L6 11 C11 10 14 6 14 1 Z M4 9 L1 14 L6 11" fill="none" stroke="#888"/></svg>
      <svg width="14" height="16" viewBox="0 0 14 16" class="sg-18"><path d="M7 0 V15 M1 9 L7 15 L13 9" fill="none" stroke="#777"/></svg>
      <span class="sg-6">下载</span>
      <svg width="14" height="15" viewBox="0 0 14 15" class="ms-3"><path d="M2 7.500 H12 A5.500 5.500 0 1 0 10 12 M13 1 C9 1 3 5 1 13" fill="none" stroke="#999"/></svg>
      <svg width="13" height="14" viewBox="0 0 13 14" class="ms-4"><path d="M3 3 V1 H12 V11 H10 M1 3 H10 V13 H1 Z" fill="none" stroke="#aaa"/></svg>
      <svg width="14" height="14" viewBox="0 0 14 14" class="ms-4"><path d="M1 5 H3 L7 1 V13 L3 9 H1 Z M9.500 4 A4 4 0 0 1 9.500 10 M11 2 A7 7 0 0 1 11 12" fill="none" stroke="#bbb"/></svg>
      <svg width="14" height="14" viewBox="0 0 14 14" class="sg-18"><circle cx="6" cy="6" r="5" fill="none" stroke="#777"/><path d="M9.500 9.500 L13 13" stroke="#777" stroke-width="1.300"/></svg>
      <span class="state-zoom sg-6">110%</span>
    </div>
  </div>

  <!-- windows taskbar -->
  <div class="task-bar d-flex align-items-stretch">
    <div class="task-start d-flex align-items-center justify-content-center">
      <svg width="16" height="16" viewBox="0 0 16 16" fill="#fff"><path d="M0 2.200 L7 1.200 V7.500 H0 Z M8 1 L16 0 V7.500 H8 Z M0 8.500 H7 V14.800 L0 13.800 Z M8 8.500 H16 V16 L8 15 Z"/></svg>
    </div>
    <div class="task-search d-flex align-items-center">
      <svg width="20" height="20" viewBox="0 0 20 20"><circle cx="10" cy="10" r="8" fill="none" stroke="#e6e6e6" stroke-width="2.400"/></svg>
      <span>在这里输入你要搜索的内容</span>
      <svg width="10" height="18" viewBox="0 0 10 18" class="ms-auto"><rect x="2.500" y=".5" width="5" height="11" rx="2.500" fill="none" stroke="#777"/><path d="M.5 8 A4.500 4.500 0 0 0 9.500 8 M5 12.500 V17 M2 17 H8" fill="none" stroke="#777"/></svg>
    </div>
    <div class="task-view d-flex align-items-center justify-content-center">
      <svg width="20" height="16" viewBox="0 0 20 16"><rect x="5.500" y=".5" width="9" height="15" fill="none" stroke="#fff"/><path d="M3 3 H.5 V13 H3 M17 3 H19.500 V13 H17" fill="none" stroke="#fff"/></svg>
    </div>
    <div class="task-slot-wide d-flex align-items-center justify-content-center">
      <svg width="22" height="22" viewBox="0 0 22 22" fill="#e6e6e6"><path d="M2 1 C7 -1 11 3 10.500 9 C6 10 0 7 2 1 Z M20 1 C22 7 17 10 11.500 10 C11 4 15 -1 20 1 Z M2 21 C0 15 5 12 10.500 12 C11 18 7 23 2 21 Z M20 21 C15 23 11 18 11.500 12 C17 12 22 15 20 21 Z"/></svg>
    </div>
    <div class="task-slot-wide d-flex align-items-center justify-content-center">
      <svg width="22" height="24" viewBox="0 0 22 24"><path d="M4 12.500 H18 A7.500 7.500 0 1 0 15 19" fill="none" stroke="#eee" stroke-width="3"/><path d="M20 2 C14 2 5 8 2 22" fill="none" stroke="#eee"/></svg>
    </div>
    <div class="task-slot-wide d-flex align-items-center justify-content-center">
      <svg width="20" height="20" viewBox="0 0 20 20"><path d="M13 2 C6 0 1 6 2 11 C3 17 10 19 15 16 C19 13 18 7 13 6 C9 5 6 8 7 11 C8 14 12 14 13 11" fill="none" stroke="#ccc" stroke-width="1.600"/></svg>
    </div>
    <div class="task-slot-wide d-flex align-items-center justify-content-center">
      <svg width="22" height="24" viewBox="0 0 22 24"><path d="M3 13 H19 A8 8 0 1 0 15 20" fill="none" stroke="#0b72d6" stroke-width="5"/></svg>
    </div>
    <div class="task-slot d-flex align-items-center justify-content-center">
      <svg width="26" height="26" viewBox="0 0 26 26"><path d="M6 13.500 H21 A8 8 0 1 0 18 20" fill="none" stroke="#2f9ce6" stroke-width="4"/><path d="M23 3 C17 1 6 9 3 23" fill="none" stroke="#f0c730" stroke-width="1.500"/></svg>
    </div>
    <div class="task-slot task-open d-flex align-items-center justify-content-center">
      <svg width="22" height="22" viewBox="0 0 22 22"><path d="M0 3 H8 L10 6 H22 V21 H0 Z" fill="#f5d36a"/><rect x="7" y="12" width="8" height="9" fill="#3fa9e8"/><rect x="0" y="6" width="22" height="2" fill="#fbe9a8"/></svg>
    </div>
    <div class="task-slot task-open d-flex align-items-center justify-content-center">
      <svg width="24" height="26" viewBox="0 0 24 26"><path d="M21 2 C10 0 1 7 2 16 C3 24 13 27 19 22 C24 17 21 10 14 11 C11 11 10 14 12 16" fill="none" stroke="#1a8fe8" stroke-width="4.500"/></svg>
    </div>
    <div class="task-slot task-active task-open d-flex align-items-center justify-content-center">
      <svg width="24" height="24" viewBox="0 0 24 24"><circle cx="12" cy="12" r="10" fill="#8fd84f" stroke="#dff5c6"/><path d="M5 12.500 H19 A7 7 0 1 0 16 18" fill="none" stroke="#fff" stroke-width="2.600"/></svg>
    </div>
    <div class="task-slot task-open d-flex align-items-center justify-content-center">
      <svg width="24" height="24" viewBox="0 0 24 24"><rect width="24" height="24" rx="4" fill="#0f92ee"/><path d="M12 4 V20 M5 12 C5 9 9 9 9 12 H15 C15 9 19 9 19 12 M8 16 C9 19 15 19 16 16" fill="none" stroke="#fff" stroke-width="2"/></svg>
    </div>
    <div class="task-slot task-open d-flex align-items-center justify-content-center">
      <svg width="24" height="24" viewBox="0 0 24 24"><rect width="24" height="24" fill="#f08a1d"/><rect x="4" y="4" width="16" height="17" fill="#fbe9b7"/><path d="M7 9 H16 M7 13 H16 M7 17 H13" stroke="#b98a4a"/><path d="M22 1 L12 14" stroke="#c0501a" stroke-width="2"/></svg>
    </div>
    <div class="task-slot task-open d-flex align-items-center justify-content-center">
      <svg width="22" height="24" viewBox="0 0 22 24"><rect x="1" y="7" width="11" height="16" fill="#eee"/><path d="M3 11 H10 M3 15 H10 M3 19 H10" stroke="#555"/><text x="15" y="15" text-anchor="middle" font-size="17" font-weight="700" fill="#f7e62a">?</text></svg>
    </div>
    <div class="task-slot task-open d-flex align-items-center justify-content-center">
      <svg width="22" height="24" viewBox="0 0 22 24"><rect x="1" y="7" width="11" height="16" fill="#eee"/><path d="M3 11 H10 M3 15 H10 M3 19 H10" stroke="#555"/><text x="15" y="15" text-anchor="middle" font-size="17" font-weight="700" fill="#f7e62a">?</text></svg>
    </div>
    <div class="tray-text d-flex align-items-center ms-2">链接</div>
    <div class="d-flex align-items-center">
      <svg width="14" height="8" viewBox="0 0 14 8" class="ms-2"><path d="M1 7.500 L7 1 L13 7.500" fill="none" stroke="#eee" stroke-width="1.200"/></svg>
      <svg width="18" height="14" viewBox="0 0 18 14" class="ms-2"><rect x="4" y="4" width="13" height="9" fill="#fff"/><rect x="5" y="1" width="2" height="3" fill="#fff"/><rect x="9" y="1" width="2" height="3" fill="#fff"/><rect x="10" y="6" width="6" height="5" fill="#222"/></svg>
      <svg width="17" height="15" viewBox="0 0 17 15" class="ms-2"><path d="M1 14 A13 13 0 0 1 14 1 M4 14 A10 10 0 0 1 14 4 M7 14 A7 7 0 0 1 14 7" fill="none" stroke="#ddd"/><circle cx="12" cy="13" r="1.500" fill="#fff"/></svg>
      <svg width="15" height="14" viewBox="0 0 15 14" class="sg-6"><path d="M1 5 H3 L7 1 V13 L3 9 H1 Z M9.500 4 A4 4 0 0 1 9.500 10 M11.500 2 A7 7 0 0 1 11.500 12" fill="none" stroke="#eee"/></svg>
      <svg width="23" height="15" viewBox="0 0 23 15" class="sg-11"><rect x=".5" y=".5" width="22" height="14" fill="none" stroke="#eee"/><path d="M3 4 H20 M3 7 H20" stroke="#eee" stroke-dasharray="1.500 1"/><path d="M6 11 H17" stroke="#eee"/></svg>
      <span class="tray-text ms-2">中</span>
      <svg width="16" height="18" viewBox="0 0 16 18" class="ms-3"><path d="M3 1 L15 0 L16 15 L3 18 L0 5 Z" fill="#e8361f"/><text x="8" y="13.500" text-anchor="middle" font-size="13" font-weight="700" fill="#fff">S</text></svg>
    </div>
    <div class="tray-time d-flex flex-column justify-content-center"><span>14:55</span><span>2018/4/18</span></div>
    <div class="task-slot note-slot ms-auto d-flex align-items-center justify-content-center">
      <svg width="16" height="18" viewBox="0 0 16 18"><path d="M0 0 H16 V13 H6 L3 17 V13 H0 Z" fill="#fff"/><path d="M3 4 H13 M3 7 H13 M3 10 H13" stroke="#444"/></svg>
      <span class="note-badge d-flex align-items-center justify-content-center">1</span>
    </div>
  </div>

  <script src="https://cdn.jsdelivr.net/npm/bootstrap@5.3.3/dist/js/bootstrap.bundle.min.js"></script>
</body>
</html>
